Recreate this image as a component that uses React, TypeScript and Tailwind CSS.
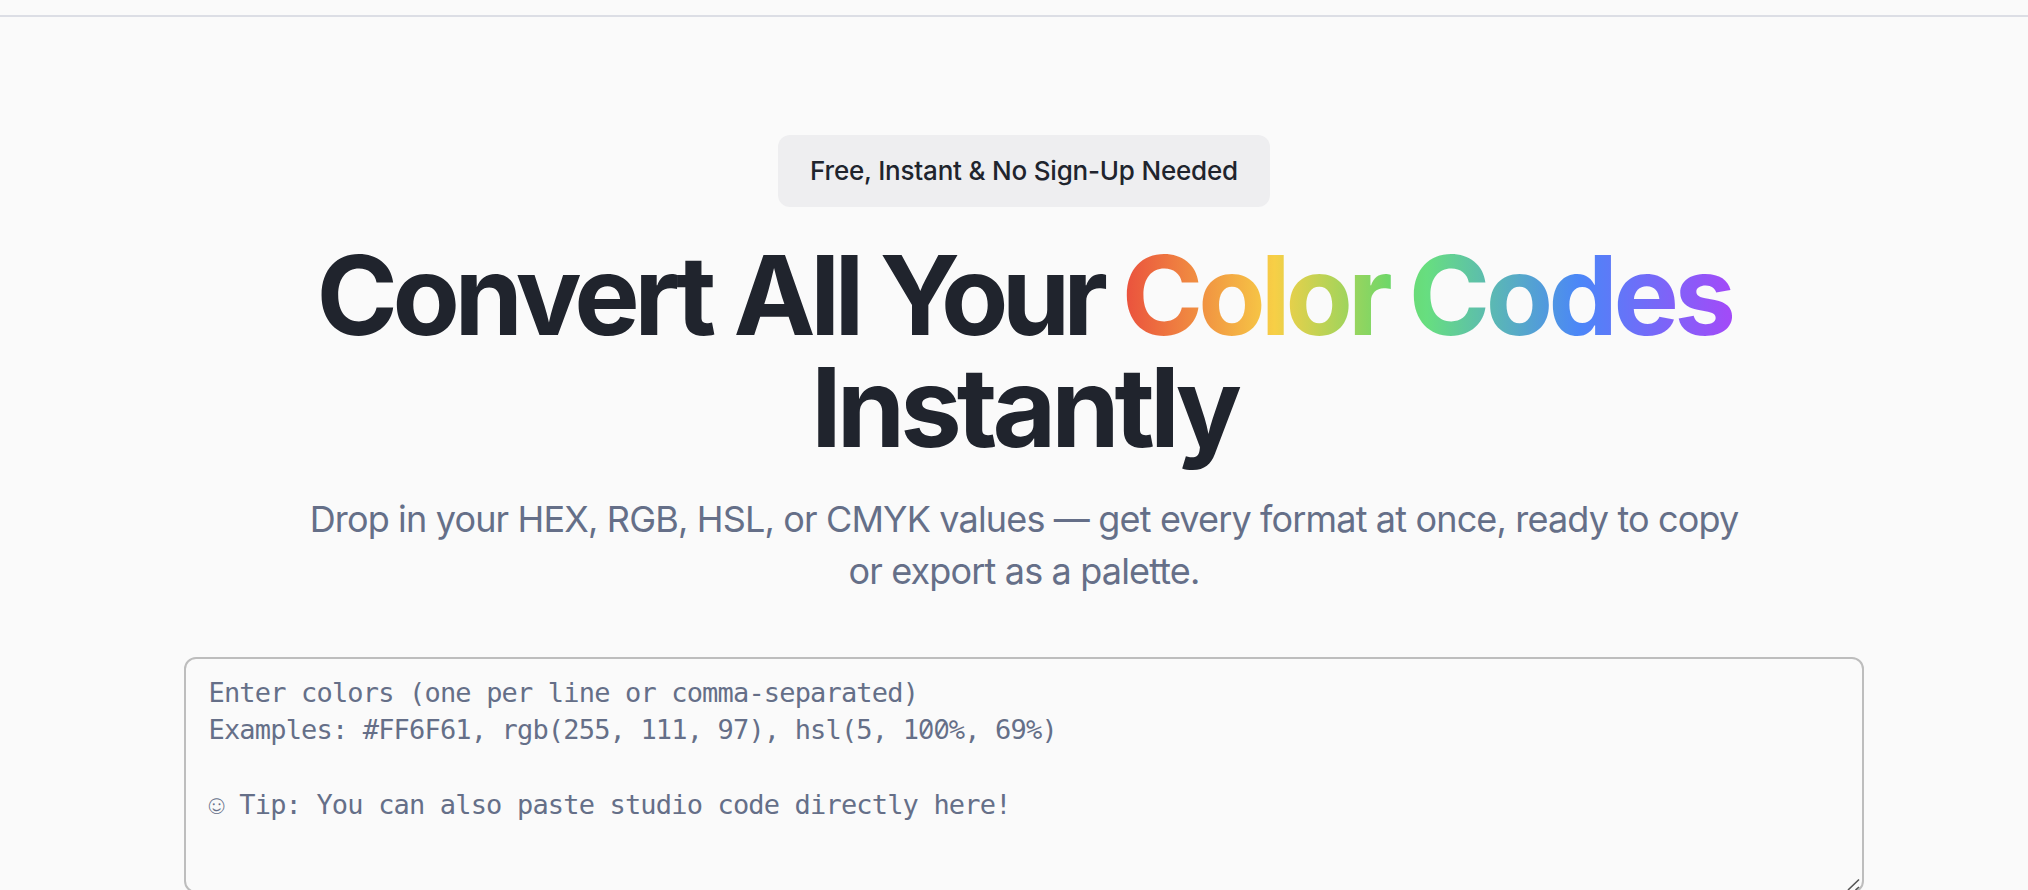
export default function App() {
  return (
    <div className="h-[890px] overflow-hidden bg-[#fafafa] font-['Inter',sans-serif] text-[#20242d]">
      <header className="h-[17px] border-b-2 border-[#dcdee5]" />
      <main className="ml-[184px] flex w-[1680px] flex-col items-center pt-[118px]">
        <div className="flex h-[72px] w-[492px] items-center justify-center rounded-xl bg-[#eeeef0] text-[26px] leading-[36px] font-medium tracking-[-0.2px] whitespace-nowrap">
          Free, Instant &amp; No Sign-Up Needed
        </div>
        <h1 className="mt-[32px] text-center text-[110px] leading-[112px] font-bold tracking-[-5.4px] whitespace-nowrap">
          Convert <span className="ml-[2px]">All</span>{' '}
          <span className="tracking-[-6.9px]">Your</span>{' '}
          <span className="bg-[linear-gradient(to_right,#ea4f3d,#f7cf46_25%,#6dd769_44%,#67de80_50%,#4b86f8_75%,#a34af8)] bg-clip-text tracking-[-5px] text-transparent">
            Color <span className="tracking-[-4.5px]">Codes</span>
          </span>
          <br />
          <span className="tracking-[-5.1px]">Instantly</span>
        </h1>
        <p className="mt-[30px] text-center text-[36px] leading-[52px] tracking-[-0.84px] whitespace-nowrap text-[#656f88]">
          Drop in your HEX, RGB, HSL, or CMYK values — get every format at once, ready to copy
          <br />
          or export as a palette.
        </p>
        <div className="relative mt-[60px] h-[236px] w-full shrink-0 rounded-xl border-2 border-[#bdbdbd] pt-[15px] pl-[22.5px] font-['DejaVu_Sans_Mono',monospace] text-[27px] leading-[37.33px] tracking-[-0.83px] whitespace-pre text-[#656f88]">
          <div className="h-[37.33px]">Enter colors (one per line or comma-separated)</div>
          <div className="h-[37.33px]">
            Examples: #FF6F61, rgb(255, 111, 97), hsl(5, 1
            <span className="font-['Noto_Sans_Mono',monospace] leading-none">00</span>
            %, 69%)
          </div>
          <div className="mt-[37.33px] h-[37.33px]">
            <span className="font-['Liberation_Mono',monospace] leading-none">☺</span>
            {' Tip: You can also paste studio code directly here!'}
          </div>
          <svg
            className="absolute right-[2px] bottom-px h-[13px] w-[13px]"
            viewBox="0 0 13 13"
            fill="none"
            stroke="#555"
            strokeWidth="1.6"
          >
            <path d="M1 13 12 2.5M8.5 13 12 10" />
          </svg>
        </div>
      </main>
    </div>
  );
}
